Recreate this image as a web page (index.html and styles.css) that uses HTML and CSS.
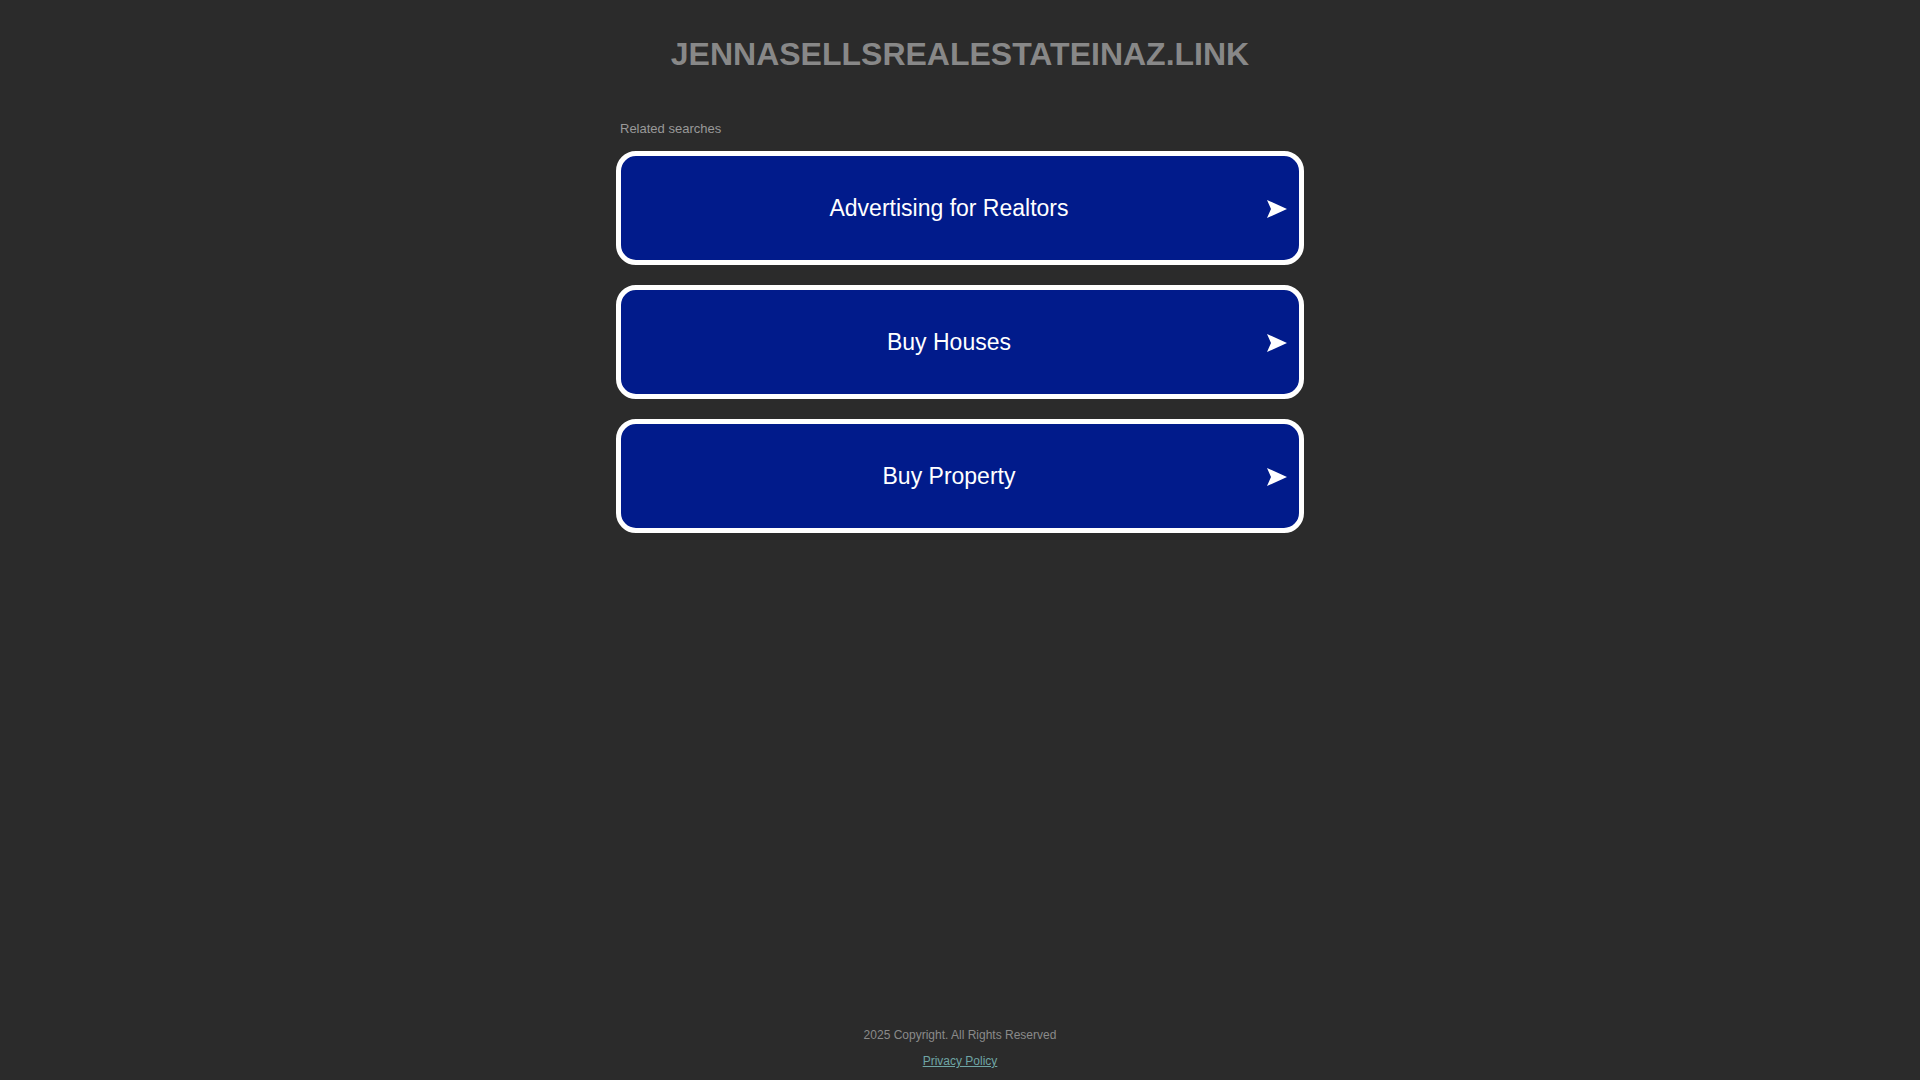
FILE: index.html
```html
<!DOCTYPE html>
<html lang="en">
<head>
<meta charset="utf-8">
<title>jennasellsrealestateinaz.link</title>
<link rel="stylesheet" href="styles.css">
</head>
<body>
<div class="page">
  <header class="header">
    <h1 class="domain">JENNASELLSREALESTATEINAZ.LINK</h1>
  </header>
  <main class="content">
    <div class="related">Related searches</div>
    <a class="search-box" href="#"><span class="label">Advertising for Realtors</span><svg class="arrow" width="20" height="18" viewBox="0 0 20 18"><polygon points="0,0 20,9 0,18 4,9" fill="#fff"/></svg></a>
    <a class="search-box" href="#"><span class="label">Buy Houses</span><svg class="arrow" width="20" height="18" viewBox="0 0 20 18"><polygon points="0,0 20,9 0,18 4,9" fill="#fff"/></svg></a>
    <a class="search-box" href="#"><span class="label">Buy Property</span><svg class="arrow" width="20" height="18" viewBox="0 0 20 18"><polygon points="0,0 20,9 0,18 4,9" fill="#fff"/></svg></a>
  </main>
  <footer class="footer">
    <div class="copyright">2025 Copyright. All Rights Reserved</div>
    <a class="privacy" href="#">Privacy Policy</a>
  </footer>
</div>
</body>
</html>
```

FILE: styles.css
```css
html, body {
  margin: 0;
  padding: 0;
  background: #2b2b2b;
  font-family: "Liberation Sans", Arial, sans-serif;
}

.page {
  display: flex;
  flex-direction: column;
  min-height: 100vh;
  box-sizing: border-box;
}

.header {
  padding-top: 35px;
  text-align: center;
}

.domain {
  margin: 0;
  font-size: 32px;
  line-height: 38px;
  font-weight: bold;
  color: #888888;
}

.content {
  width: 688px;
  margin: 48px auto 0;
  display: flex;
  flex-direction: column;
}

.related {
  font-size: 13px;
  line-height: 16px;
  color: #999999;
  padding-left: 4px;
  margin-bottom: 14px;
}

.search-box {
  position: relative;
  display: flex;
  align-items: center;
  justify-content: center;
  height: 114px;
  box-sizing: border-box;
  border: 5px solid #ffffff;
  border-radius: 20px;
  background: #011b8b;
  margin-bottom: 20px;
  padding-right: 22px;
  text-decoration: none;
}

.label {
  color: #ffffff;
  font-size: 23px;
  line-height: 28px;
}

.arrow {
  position: absolute;
  right: 12px;
  top: 44px;
}

.footer {
  margin-top: auto;
  padding-bottom: 11px;
  display: flex;
  flex-direction: column;
  align-items: center;
  gap: 10px;
}

.copyright {
  font-size: 12px;
  line-height: 16px;
  color: #8a8a8a;
}

.privacy {
  font-size: 12px;
  line-height: 16px;
  color: #6fa5a5;
}
```
